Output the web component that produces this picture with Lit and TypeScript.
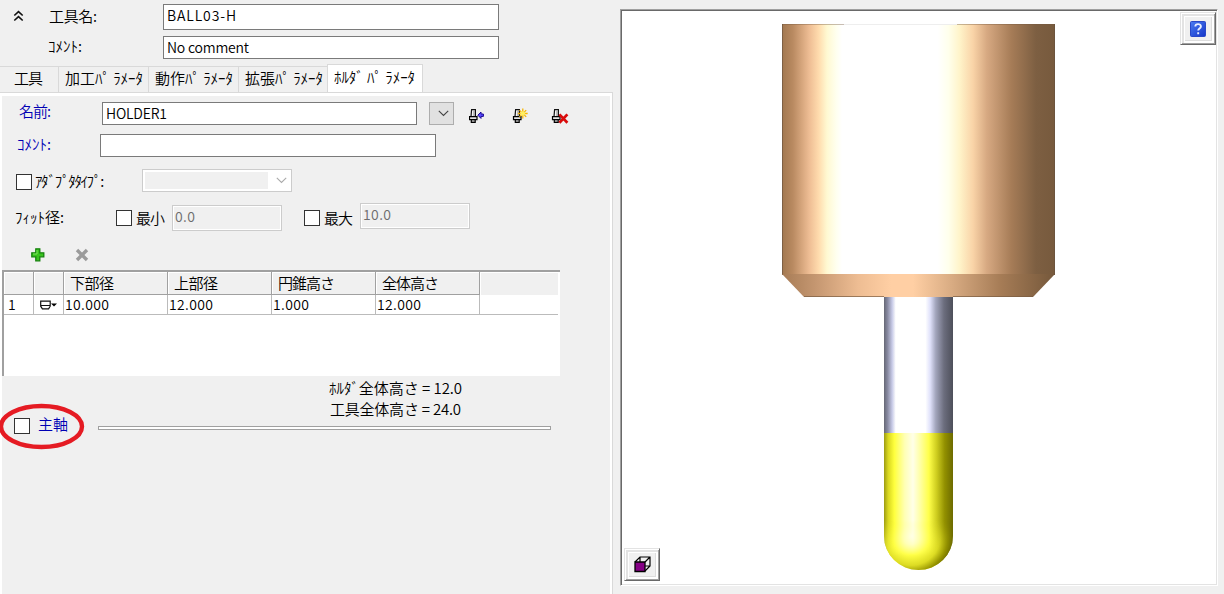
import { LitElement, html, svg, css } from "lit";
import { customElement, property } from "lit/decorators.js";

/** One line of text whose tracking is adjusted to fill a given width. */
@customElement("ui-text")
class UiText extends LitElement {
  @property() text = "";
  @property({ type: Number }) fit = 0;
  static styles = css`
    :host { display: block; flex: none; white-space: pre; }
    .t { display: inline-block; }
  `;
  render() { return html`<span class="t">${this.text}</span>`; }
  updated() {
    const el = this.renderRoot.querySelector(".t") as HTMLElement;
    el.style.letterSpacing = "0px";
    const n = Math.max(1, [...this.text].length - 1);
    if (this.fit) el.style.letterSpacing = `${(this.fit - el.getBoundingClientRect().width) / n}px`;
  }
}

const t = (text: string, fit: number, cls = "") =>
  html`<ui-text class=${cls} text=${text} fit=${fit}></ui-text>`;

const holderShape = svg`
  <path d="M3.6 1.6h3.8v7H3z" fill="#f4f4f4" stroke="#111" stroke-width="1.2"/>
  <path d="M6 2.4v5.8" stroke="#999" stroke-width="1.2"/>
  <path d="M1.5 8.6h7.5v3H1.5z" fill="#e4e4e4" stroke="#000" stroke-width="1.2"/>
  <path d="M3.3 11.6h3.9v2.8H3.3z" fill="#bbb" stroke="#000" stroke-width="1.2"/>`;

@customElement("app-root")
class AppRoot extends LitElement {
  static styles = css`
    :host { display: block; }
    * { box-sizing: border-box; }
    .app { display: flex; width: 1224px; height: 594px; background: #f0f0f0; overflow: hidden; color: #000;
      font: 350 15px/20px "Noto Sans CJK JP", sans-serif; }
    svg { display: block; flex: none; }
    .left { width: 613px; flex: none; display: flex; flex-direction: column; }
    .row { display: flex; align-items: flex-start; flex: none; }
    .head { height: 64px; padding-top: 4px; display: grid; grid-template-columns: 48px 115px 336px; grid-template-rows: 26px 23px; row-gap: 6px; flex: none; }
    .chev { padding: 6px 0 0 13px; }
    .hl1 { padding: 2px 0 0 1px; }
    .hl2 { grid-column: 2; }
    .inp { background: #fff; border: 1px solid #7a7a7a; height: 23px; padding-left: 3px; flex: none; font-size: 14px; line-height: 21px; }
    .inp.tall { height: 26px; line-height: 20px; }
    .tabs { display: flex; align-items: flex-end; height: 28px; flex: none; }
    .tab { height: 26px; border-top: 1px solid #d9d9d9; border-right: 1px solid #d9d9d9; padding-top: 1px; width: 90px; padding-left: 6px; }
    .tab.first { width: 59px; padding-left: 14px; }
    .tab.last { border-right: 0; width: 88px; }
    .tab.on { height: 28px; width: 96px; background: #fff; border: 1px solid #d9d9d9; border-bottom: 0; padding: 2px 0 0 6px; }
    .panel { flex: 1; border-top: 1px solid #d9d9d9; border-right: 1px solid #d9d9d9; display: flex; }
    .inner { flex: 1; border: 2px solid #fff; border-top-width: 3px; border-bottom: 0; display: flex; flex-direction: column; }
    .blue { color: #0000b4; }
    .r-name { height: 32px; padding: 6px 0 0 17px; }
    .r-name .blue { width: 83px; margin-top: -1px; }
    .w315 { width: 315px; } .w336 { width: 336px; }
    .drop { width: 25px; height: 23px; margin-left: 12px; background: #e1e1e1; border: 1px solid #adadad; padding: 7px 0 0 8px; }
    .ic1 { margin: 7px 0 0 15px; } .ic2 { margin: 6px 0 0 26px; } .ic3 { margin: 6px 0 0 21px; }
    .r-com { height: 35px; padding: 6px 0 0 15px; }
    .r-com .blue { width: 83px; }
    .cb { width: 16px; height: 16px; border: 1px solid #333; background: #fff; flex: none; }
    .r-ad { height: 34px; padding: 6px 0 0 14px; }
    .r-ad .cb { margin-top: 5px; }
    .lab-ad { width: 107px; padding: 2px 0 0 3px; }
    .sel { width: 150px; height: 23px; margin-left: 3px; border: 1px solid #ccc; background: #fff; padding: 2px; display: flex; }
    .sel i { background: #f0f0f0; width: 123px; }
    .sel svg { margin: 5px 0 0 8px; }
    .r-fit { height: 39px; padding: 6px 0 0 13px; }
    .r-fit .cb { margin-top: 7px; }
    .lab-fit { width: 101px; padding-top: 4px; }
    .lab-mm { width: 40px; padding: 5px 0 0 4px; }
    .dis { width: 110px; height: 26px; border: 1px solid #ccc; box-shadow: inset 0 0 0 1px #fff; color: #6d6d6d; padding-left: 2px; font-size: 14px; line-height: 21px; }
    .dis.a { margin-top: 2px; margin-right: 22px; }
    .r-tool { height: 34px; padding: 12px 0 0 29px; gap: 30px; }
    .grid { width: 558px; height: 106px; background: #fff; border-top: 2px solid #a0a0a0; border-left: 2px solid #a0a0a0; flex: none; }
    .cells { display: grid; grid-template-columns: 30px 30px 104px 104px 104px 104px 78px; }
    .th { height: 23px; background: #f0f0f0; border-right: 1px solid #a0a0a0; border-bottom: 1px solid #a0a0a0; padding: 1px 0 0 6px; box-shadow: inset 1px 1px #fff; }
    .th.end { border: 0; }
    .td { height: 20px; border-right: 1px solid #bbb; border-bottom: 1px solid #bbb; padding-left: 1px; font-size: 14px; line-height: 19px; }
    .td.end { border-right: 0; }
    .td.n { padding-left: 4px; } .td.k { padding: 5px 0 0 6px; }
    .sum { display: flex; flex-direction: column; gap: 1px; padding: 2px 0 0 327px; height: 41px; flex: none; }
    .sum .b { padding-left: 1px; }
    .spin { position: relative; padding-left: 12px; }
    .spin .cb { margin-top: 1px; }
    .spin .blue { margin-left: 8px; width: 61px; margin-top: -3px; }
    .rule { height: 4px; width: 453px; border: 1px solid #a0a0a0; background: #fff; margin-top: 9px; margin-left: -1px; }
    .ring { position: absolute; left: -4px; top: -15px; }
    .view { position: relative; margin: 9px 0 0 7px; width: 598px; height: 577px; flex: none; background: #fff; padding: 1px;
      border: 1px solid; border-color: #a0a0a0 #fff #fff #a0a0a0; box-shadow: inset 1px 1px #696969, inset -1px -1px #e3e3e3; }
    .btn { position: absolute; width: 36px; height: 33px; background: #f0f0f0; border: 1px solid; border-color: #e3e3e3 #696969 #696969 #e3e3e3;
      box-shadow: inset 1px 1px #fff, inset -1px -1px #a0a0a0, inset 3px 3px #e3e3e3, inset -3px -3px #fff, inset 4px 4px #fff, inset -4px -4px #ddd; }
    .help { right: 1px; top: 2px; padding: 8px 0 0 9px; }
    .cube { left: 3px; bottom: 4px; padding: 7px 0 0 9px; }
  `;

  private chevron(color: string) {
    return html`<svg width="11" height="7"><path d="M.8 .8 5.5 5.5 10.2 .8" fill="none" stroke=${color} stroke-width="1.1"/></svg>`;
  }

  private tool() {
    const stops = (list: [number, string][]) => list.map(([o, c]) => svg`<stop offset=${o} stop-color=${c}/>`);
    return html`<svg width="594" height="573" viewBox="622 11 594 573">
      <defs>
        <linearGradient id="body">${stops([[0, "#a27850"], [0.04, "#b98a61"], [0.1, "#eebd94"], [0.135, "#ffdcae"], [0.165, "#fff9d2"], [0.2, "#fffff0"], [0.22, "#fff"], [0.57, "#fff"], [0.61, "#ffffec"], [0.65, "#fff4ca"], [0.7, "#f9d3a7"], [0.75, "#d7a982"], [0.84, "#a67c57"], [0.93, "#7d5f42"], [1, "#775a3d"]])}</linearGradient>
        <linearGradient id="cone">${stops([[0, "#a77c56"], [0.12, "#c49670"], [0.28, "#eebd93"], [0.4, "#ffcfa4"], [0.48, "#ffcfa4"], [0.62, "#d9ac83"], [0.8, "#a67c56"], [1, "#75583b"]])}</linearGradient>
        <linearGradient id="shank">${stops([[0, "#666875"], [0.05, "#8789a0"], [0.12, "#c9cce8"], [0.17, "#fff"], [0.6, "#fff"], [0.67, "#dfe1fa"], [0.75, "#a2a5bc"], [0.87, "#6b6d7d"], [1, "#4d4f5a"]])}</linearGradient>
        <linearGradient id="cut">${stops([[0, "#9c9b12"], [0.06, "#d9d71f"], [0.15, "#ffff3d"], [0.3, "#ffffb5"], [0.42, "#ffffe8"], [0.52, "#ffffa8"], [0.65, "#ffff4a"], [0.76, "#cfce20"], [0.88, "#929000"], [1, "#6d6b00"]])}</linearGradient>
        <radialGradient id="ball" gradientUnits="userSpaceOnUse" cx="911" cy="536" r="42">${stops([[0, "#ffffe8"], [0.2, "#ffffb5"], [0.45, "#ffff45"], [0.7, "#dddc24"], [0.88, "#969400"], [1, "#6d6b00"]])}</radialGradient>
        <linearGradient id="fadeg" x2="0" y2="1"><stop offset="0" stop-color="#000"/><stop offset=".65" stop-color="#fff"/></linearGradient>
        <mask id="fade"><rect x="880" y="520" width="80" height="55" fill="url(#fadeg)"/></mask>
      </defs>
      <path d="M782 24h273v251H782z" fill="url(#body)"/>
      <path d="M782 24.5h62M957 24.5h98" stroke="#755a42" stroke-opacity=".4"/>
      <path d="M844 24.5h113" stroke="#eee"/>
      <path d="M782.5 24v251M1054.5 24v251" stroke="#65503d" stroke-opacity=".6"/>
      <path d="M782 274h273l-22 23H804z" fill="url(#cone)"/>
      <path d="M804 296.5h80M953 296.5h80" stroke="#7b5d41" stroke-opacity=".7"/>
      <path d="M884 297h69v136h-69z" fill="url(#shank)"/>
      <path d="M884 433h69v103a34.5 34 0 0 1-69 0z" fill="url(#cut)"/>
      <path d="M884 520h69v16a34.5 34 0 0 1-69 0z" fill="url(#ball)" mask="url(#fade)"/>
    </svg>`;
  }

  render() {
    return html`<div class="app">
      <div class="left">
        <div class="head">
          <div class="chev"><svg width="11" height="12"><path d="M1.3 5.5 5.5 1.6 9.7 5.5M1.3 10.5 5.5 6.6 9.7 10.5" fill="none" stroke="#111" stroke-width="1.6"/></svg></div>
          ${t("工具名:", 48, "hl1")}
          <div class="inp tall">${t("BALL03-H", 69)}</div>
          ${t("ｺﾒﾝﾄ:", 34, "hl2")}
          <div class="inp">${t("No comment", 82)}</div>
        </div>
        <div class="tabs">
          <div class="tab first">${t("工具", 29)}</div>
          <div class="tab">${t("加工ﾊﾟ ﾗﾒｰﾀ", 78)}</div>
          <div class="tab">${t("動作ﾊﾟ ﾗﾒｰﾀ", 78)}</div>
          <div class="tab last">${t("拡張ﾊﾟ ﾗﾒｰﾀ", 78)}</div>
          <div class="tab on">${t("ﾎﾙﾀﾞ ﾊﾟ ﾗﾒｰﾀ", 81)}</div>
        </div>
        <div class="panel"><div class="inner">
          <div class="row r-name">
            ${t("名前:", 32, "blue")}
            <div class="inp w315">${t("HOLDER1", 61)}</div>
            <div class="drop">${this.chevron("#444")}</div>
            <svg class="ic1" width="17" height="17" viewBox="1 1 17 17">${holderShape}<path d="M9.8 7.2 13 4v2h2.4v2.4H13v2z" fill="#5b4bff" stroke="#1b0a93" stroke-width="1"/></svg>
            <svg class="ic2" width="18" height="17">${holderShape}<path d="M10.8 .6v9.8M5.9 5.5h9.8M7.4 2.1l6.8 6.8M14.2 2.1 7.4 8.9" stroke="#f7b500" stroke-width="1.3"/><circle cx="10.8" cy="5.5" r="2.3" fill="#ffef60"/></svg>
            <svg class="ic3" width="18" height="17">${holderShape}<path d="M8.4 6.4l8 8.4M16.4 6.4l-8 8.4" stroke="#d90b0b" stroke-width="2.7"/></svg>
          </div>
          <div class="row r-com">
            ${t("ｺﾒﾝﾄ:", 34, "blue")}
            <div class="inp w336"></div>
          </div>
          <div class="row r-ad">
            <div class="cb"></div>
            ${t("ｱﾀﾞﾌﾟﾀﾀｲﾌﾟ:", 65, "lab-ad")}
            <div class="sel"><i></i>${this.chevron("#aaa")}</div>
          </div>
          <div class="row r-fit">
            ${t("ﾌｨｯﾄ径:", 49, "lab-fit")}
            <div class="cb"></div>${t("最小", 29, "lab-mm")}
            <div class="dis a">${t("0.0", 20)}</div>
            <div class="cb"></div>${t("最大", 29, "lab-mm")}
            <div class="dis">${t("10.0", 28)}</div>
          </div>
          <div class="row r-tool">
            <svg width="14" height="14"><path d="M4.8.8h4v4h4v4h-4v4h-4v-4h-4v-4h4z" fill="#38c31d" stroke="#15820c" stroke-width="1.3"/><path d="M6 2v4H2" fill="none" stroke="#7de65f"/></svg>
            <svg width="14" height="14"><path d="M2 2l10 10M12 2l-10 10" stroke="#9b9b9b" stroke-width="3.4"/></svg>
          </div>
          <div class="grid">
            <div class="cells">
              <div class="th"></div><div class="th"></div>
              <div class="th">${t("下部径", 44)}</div><div class="th">${t("上部径", 44)}</div>
              <div class="th">${t("円錐高さ", 57)}</div><div class="th">${t("全体高さ", 57)}</div>
              <div class="th end"></div>
              <div class="td n">${t("1", 0)}</div>
              <div class="td k"><svg width="17" height="10"><path d="M.7 1.2h9.5v5L8.6 8.8H2.4L.7 6.2zM.7 5.5h9.5" fill="none" stroke="#111" stroke-width="1.2"/><path d="M11 3.5h6l-3 3z"/></svg></div>
              <div class="td">${t("10.000", 44)}</div><div class="td">${t("12.000", 44)}</div>
              <div class="td">${t("1.000", 36)}</div><div class="td">${t("12.000", 44)}</div>
              <div class="td end"></div>
            </div>
          </div>
          <div class="sum">${t("ﾎﾙﾀﾞ全体高さ = 12.0", 133)}${t("工具全体高さ = 24.0", 131, "b")}</div>
          <div class="row spin">
            <div class="cb"></div>${t("主軸", 30, "blue")}
            <div class="rule"></div>
            <svg class="ring" width="92" height="48"><ellipse cx="43.5" cy="24.5" rx="40.5" ry="20.5" fill="none" stroke="#e51b23" stroke-width="4.4"/></svg>
          </div>
        </div></div>
      </div>
      <div class="view">
        ${this.tool()}
        <div class="btn help"><svg width="17" height="17"><defs><linearGradient id="hb" x2="1" y2="1"><stop stop-color="#4a7cf2"/><stop offset="1" stop-color="#1535c8"/></linearGradient></defs><rect x=".5" y=".5" width="15" height="15" rx="1" fill="url(#hb)" stroke="#2948c8"/><path d="M5.3 5.5c0-3.2 5.6-3.2 5.6 0 0 2-2.7 2-2.7 4M8.2 11.3v2" fill="none" stroke="#e8efff" stroke-width="1.9"/></svg></div>
        <div class="btn cube"><svg width="18" height="17"><path d="M1 6 6 1h10v9l-5 5M6 1v5M11 6l5-5M11 10h5" fill="none" stroke="#000" stroke-width="1.2"/><path d="M1 6h10v9.5H1z" fill="#850085" stroke="#000" stroke-width="1.3"/></svg></div>
      </div>
    </div>`;
  }
}
